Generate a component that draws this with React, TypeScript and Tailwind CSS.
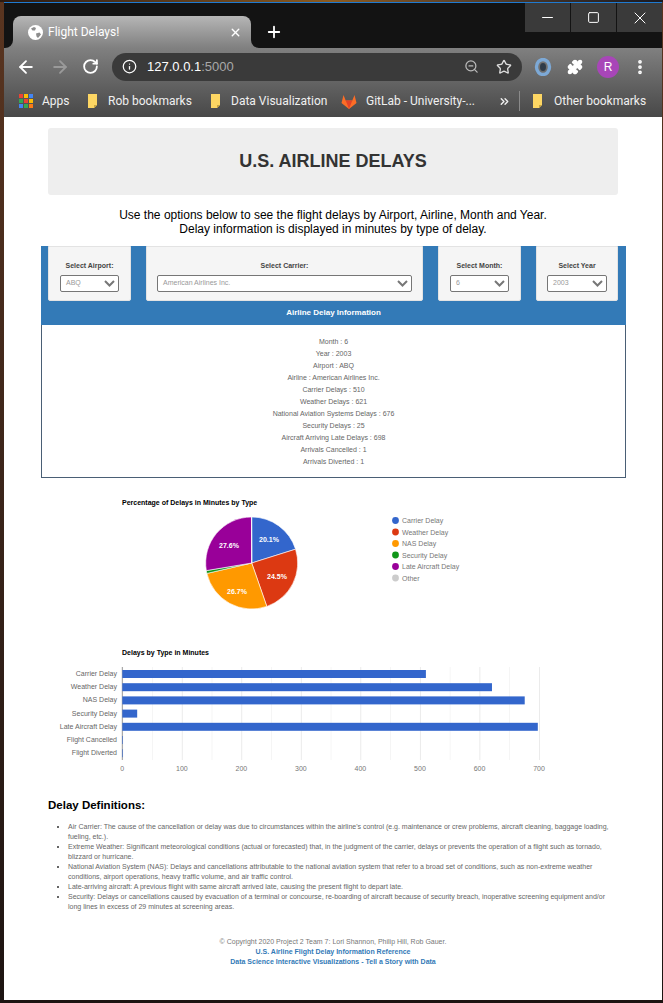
import React from 'react';
import { ArrowLeft, ArrowRight, ChevronsRight, EllipsisVertical, Info, Minus, Plus, Puzzle, RotateCw, Square, Star, X, ZoomOut } from 'lucide-react';

const details = [
  'Month : 6',
  'Year : 2003',
  'Airport : ABQ',
  'Airline : American Airlines Inc.',
  'Carrier Delays : 510',
  'Weather Delays : 621',
  'National Aviation Systems Delays : 676',
  'Security Delays : 25',
  'Aircraft Arriving Late Delays : 698',
  'Arrivals Cancelled : 1',
  'Arrivals Diverted : 1',
];

const definitions = [
  "Air Carrier: The cause of the cancellation or delay was due to circumstances within the airline's control (e.g. maintenance or crew problems, aircraft cleaning, baggage loading, fueling, etc.).",
  'Extreme Weather: Significant meteorological conditions (actual or forecasted) that, in the judgment of the carrier, delays or prevents the operation of a flight such as tornado, blizzard or hurricane.',
  'National Aviation System (NAS): Delays and cancellations attributable to the national aviation system that refer to a broad set of conditions, such as non-extreme weather conditions, airport operations, heavy traffic volume, and air traffic control.',
  'Late-arriving aircraft: A previous flight with same aircraft arrived late, causing the present flight to depart late.',
  'Security: Delays or cancellations caused by evacuation of a terminal or concourse, re-boarding of aircraft because of security breach, inoperative screening equipment and/or long lines in excess of 29 minutes at screening areas.',
];

const slices = [
  { name: 'Carrier Delay', value: 510, color: '#3366cc' },
  { name: 'Weather Delay', value: 621, color: '#dc3912' },
  { name: 'NAS Delay', value: 676, color: '#ff9900' },
  { name: 'Security Delay', value: 25, color: '#109618' },
  { name: 'Late Aircraft Delay', value: 698, color: '#990099' },
  { name: 'Other', value: 2, color: '#cccccc' },
];

const bars = [
  { name: 'Carrier Delay', value: 510 },
  { name: 'Weather Delay', value: 621 },
  { name: 'NAS Delay', value: 676 },
  { name: 'Security Delay', value: 25 },
  { name: 'Late Aircraft Delay', value: 698 },
  { name: 'Flight Cancelled', value: 1 },
  { name: 'Flight Diverted', value: 1 },
];

const Folder = () => (
  <svg width="11" height="15" viewBox="0 0 11 15" className="shrink-0">
    <path d="M1 0h9v11l-3 3H1z" fill="#fdd663" />
    <path d="M10 11l-3 3v-3z" fill="#c9a53f" />
  </svg>
);

const Chevron = () => (
  <svg width="11" height="7" viewBox="0 0 11 7" className="shrink-0">
    <path d="M1 1l4.5 4.5L10 1" fill="none" stroke="#777" strokeWidth="2" />
  </svg>
);

const Picker = ({ label, value, width, pad }: { label: string; value: string; width: string; pad: string }) => (
  <div className={`${width} ${pad} h-[55px] shrink-0 bg-[#f5f5f5] border border-[#e3e3e3] rounded-b-[2px] flex flex-col items-center`}>
    <div className="mt-[14px] text-[7px] leading-[10px] font-bold text-[#444]">{label}</div>
    <div className="mt-[4px] w-full h-[17px] bg-white border border-[#767676] rounded-[2px] flex items-center justify-between pl-[5px] pr-[3px]">
      <span className="text-[7px] text-[#999]">{value}</span>
      <Chevron />
    </div>
  </div>
);

const PieChart = () => {
  const total = slices.reduce((sum, s) => sum + s.value, 0);
  const cx = 251.7;
  const cy = 563;
  const r = 46;
  let angle = -Math.PI / 2;
  return (
    <svg width="658" height="130" viewBox="4 490 658 130" className="block" fontFamily="'Liberation Sans', sans-serif">
      <text x="122" y="504.5" fontSize="7" fontWeight="700" fill="#000">Percentage of Delays in Minutes by Type</text>
      {slices.map((s) => {
        const start = angle;
        angle += (s.value / total) * Math.PI * 2;
        const large = angle - start > Math.PI ? 1 : 0;
        const d = `M${cx} ${cy}L${cx + r * Math.cos(start)} ${cy + r * Math.sin(start)}A${r} ${r} 0 ${large} 1 ${cx + r * Math.cos(angle)} ${cy + r * Math.sin(angle)}Z`;
        return <path key={s.name} d={d} fill={s.color} stroke="#fff" strokeWidth="0.6" />;
      })}
      <g fontSize="7" fontWeight="700" fill="#fff" textAnchor="middle">
        <text x="269" y="542">20.1%</text>
        <text x="277" y="579">24.5%</text>
        <text x="237" y="594">26.7%</text>
        <text x="229" y="548">27.6%</text>
      </g>
      {slices.map((s, i) => (
        <g key={s.name}>
          <circle cx="395.5" cy={520.5 + i * 11.5} r="3.4" fill={s.color} />
          <text x="402" y={523 + i * 11.5} fontSize="7" fill="#777">{s.name}</text>
        </g>
      ))}
    </svg>
  );
};

const BarChart = () => {
  const x0 = 122.3;
  const unit = (539 - x0) / 700;
  return (
    <svg width="658" height="140" viewBox="4 640 658 140" className="block" fontFamily="'Liberation Sans', sans-serif">
      <text x="122" y="654.5" fontSize="7" fontWeight="700" fill="#000">Delays by Type in Minutes</text>
      {Array.from({ length: 15 }, (_, i) => (
        <rect key={i} x={x0 + i * 50 * unit} y="667" width="0.8" height="93" fill={i % 2 === 0 ? '#e6e6e6' : '#f3f3f3'} />
      ))}
      <rect x={x0 - 0.5} y="667" width="1" height="93" fill="#999" />
      {bars.map((b, i) => (
        <g key={b.name}>
          <rect x={x0} y={670 + i * 13.2} width={b.value * unit} height="8" fill="#3366cc" />
          <text x="117" y={676 + i * 13.2} fontSize="7" fill="#666" textAnchor="end">{b.name}</text>
        </g>
      ))}
      {[0, 100, 200, 300, 400, 500, 600, 700].map((v) => (
        <text key={v} x={x0 + v * unit} y="771" fontSize="7" fill="#777" textAnchor="middle">{v}</text>
      ))}
    </svg>
  );
};

const BrowserChrome = () => (
  <div className="bg-gradient-to-b from-[#808080] to-[#484848] h-[69px] text-white">
    <div className="h-[37px] flex items-center">
      <ArrowLeft size={20} strokeWidth={2.2} className="ml-[12px]" />
      <ArrowRight size={20} strokeWidth={2.2} className="ml-[14px] text-[#9a9a9a]" />
      <RotateCw size={17} strokeWidth={2.6} className="ml-[12px]" />
      <div className="ml-[13px] w-[410px] h-[28px] bg-[#3a3a3a] rounded-full flex items-center px-[10px]">
        <Info size={15} />
        <span className="ml-[10px] text-[13px] leading-none">127.0.0.1<span className="text-[#a8a8a8]">:5000</span></span>
        <ZoomOut size={15} className="ml-auto text-[#bbb]" />
        <Star size={16} className="ml-[17px] text-[#ddd]" />
      </div>
      <svg width="18" height="18" viewBox="0 0 18 18" className="ml-[12px]">
        <ellipse cx="9" cy="9" rx="6.5" ry="7.5" fill="none" stroke="#7da9d6" strokeWidth="3.4" />
        <ellipse cx="9" cy="9" rx="3" ry="4" fill="#2f3c4a" />
      </svg>
      <Puzzle size={16} fill="#fff" className="ml-[15px]" />
      <div className="ml-[14px] w-[22px] h-[22px] rounded-full bg-[#a846b8] flex items-center justify-center text-[12px]">R</div>
      <EllipsisVertical size={18} strokeWidth={3} className="ml-[12px]" />
    </div>
    <div className="h-[32px] flex items-center text-[12px] leading-none text-[#f0f0f0] font-['Roboto',sans-serif]">
      <div className="ml-[15px] w-[14px] h-[14px] grid grid-cols-3 gap-[1px]">
        {['#ea4335', '#fbbc04', '#4285f4', '#34a853', '#ea4335', '#fbbc04', '#4285f4', '#34a853', '#fa7b17'].map((c, i) => (
          <span key={i} className="bg-current" style={{ color: c }} />
        ))}
      </div>
      <span className="ml-[9px] w-[45px]">Apps</span>
      <Folder />
      <span className="ml-[10px] w-[102px]">Rob bookmarks</span>
      <Folder />
      <span className="ml-[10px] w-[110px]">Data Visualization</span>
      <svg width="16" height="15" viewBox="0 0 16 15" className="shrink-0">
        <path d="M8 15L0.5 9 2.5 1l2.2 5.5h6.6L13.5 1l2 8z" fill="#fc6d26" />
        <path d="M8 15L4.7 6.5h6.6z" fill="#e24329" />
      </svg>
      <span className="ml-[9px] w-[132px] whitespace-nowrap">GitLab - University-...</span>
      <ChevronsRight size={13} strokeWidth={2.6} />
      <div className="ml-[8px] w-px h-[20px] bg-[#8a8a8a]" />
      <div className="ml-[12px]"><Folder /></div>
      <span className="ml-[11px] whitespace-nowrap">Other bookmarks</span>
    </div>
  </div>
);

const TabBar = () => (
  <div className="h-[45px] bg-[#131313] flex items-start text-white">
    <div className="relative ml-[9px] mt-[13px] w-[238px] h-[32px] rounded-t-[8px] bg-gradient-to-b from-[#b6b6b6] to-[#808080] flex items-center pl-[15px] pr-[9px]">
      {/* curved feet of the active tab */}
      <svg width="8" height="8" viewBox="0 0 8 8" className="absolute left-[-8px] bottom-0">
        <path d="M8 0v8H0a8 8 0 0 0 8-8z" fill="#808080" />
      </svg>
      <svg width="8" height="8" viewBox="0 0 8 8" className="absolute right-[-8px] bottom-0">
        <path d="M0 0v8h8a8 8 0 0 1-8-8z" fill="#808080" />
      </svg>
      <svg width="15" height="15" viewBox="0 0 15 15" className="shrink-0">
        <circle cx="7.5" cy="7.5" r="7.5" fill="#fff" />
        <path d="M3 3.5l3-1.5 2 1-1 2.5H4.5zM8 8.5l3.5-1 1.5 2-3 3.5-1.5-1.5z" fill="#8d8d8d" />
      </svg>
      <span className="ml-[5px] text-[12px] leading-none font-['Roboto',sans-serif]">Flight Delays!</span>
      <X size={13} strokeWidth={2.6} className="ml-auto" />
    </div>
    <Plus size={18} strokeWidth={2.4} className="ml-[14px] mt-[20px]" />
    <div className="ml-auto flex gap-px h-[29px]">
      <div className="w-[45px] bg-[#3a3a3a] flex items-center justify-center"><Minus size={17} strokeWidth={1} absoluteStrokeWidth /></div>
      <div className="w-[45px] bg-[#3a3a3a] flex items-center justify-center"><Square size={13} strokeWidth={1} absoluteStrokeWidth /></div>
      <div className="w-[45px] bg-[#3a3a3a] flex items-center justify-center"><X size={20} strokeWidth={1} absoluteStrokeWidth /></div>
    </div>
  </div>
);

const App = () => {
  return (
    <div className="w-[663px] h-[1003px] overflow-hidden bg-gradient-to-b from-[#5a3520] to-[#1d1412] font-['Liberation_Sans',Arial,sans-serif]">
      <div className="h-[2px] bg-gradient-to-r from-[#2a1a12] via-[#8a5a20] to-[#1a1a22]" />
      <div className="ml-[4px] mr-px border-t border-[#1f7ad0]">
        <TabBar />
        <BrowserChrome />

        <main className="bg-white h-[883px] overflow-hidden">
          {/* Title */}
          <div className="mt-[11px] mx-[44px] h-[67px] bg-[#eeeeee] rounded-[3px] flex items-center justify-center">
            <h1 className="text-[18px] font-bold text-[#333]">U.S. AIRLINE DELAYS</h1>
          </div>

          <p className="mt-[13px] text-center text-[12px] leading-[14px] text-black">
            Use the options below to see the flight delays by Airport, Airline, Month and Year.
            <br />
            Delay information is displayed in minutes by type of delay.
          </p>

          {/* Filters and details */}
          <section className="mt-[10px] ml-[37px] w-[585px]">
            <div className="bg-[#337ab7] h-[79px]">
              <div className="flex gap-[15px] px-[7px]">
                <Picker label="Select Airport:" value="ABQ" width="w-[83px]" pad="px-[11px]" />
                <Picker label="Select Carrier:" value="American Airlines Inc." width="w-[277px]" pad="px-[10px]" />
                <Picker label="Select Month:" value="6" width="w-[83px]" pad="px-[11px]" />
                <Picker label="Select Year" value="2003" width="w-[82px]" pad="px-[10px]" />
              </div>
              <div className="h-[24px] flex items-center justify-center text-[8px] font-bold text-white">Airline Delay Information</div>
            </div>
            <div className="h-[153px] border border-t-0 border-[#4a5f75] pt-[11px] text-center text-[7px] leading-[12px] text-[#666]">
              {details.map((d) => (
                <div key={d}>{d}</div>
              ))}
            </div>
          </section>

          <div className="mt-[12px]">
            <PieChart />
          </div>
          <div className="mt-[20px]">
            <BarChart />
          </div>

          {/* Definitions */}
          <section className="mt-[18px] ml-[44px] mr-[52px]">
            <h3 className="text-[11.5px] leading-[14px] font-bold text-black">Delay Definitions:</h3>
            <ul className="mt-[10px] list-[square] pl-[20px] text-[7px] leading-[10px] text-[#666]">
              {definitions.map((d) => (
                <li key={d}>{d}</li>
              ))}
            </ul>
          </section>

          <footer className="mt-[25px] text-center text-[7px] leading-[10px] text-[#777]">
            <div>© Copyright 2020 Project 2 Team 7: Lori Shannon, Philip Hill, Rob Gauer.</div>
            <div className="font-bold text-[#337ab7]">U.S. Airline Flight Delay Information Reference</div>
            <div className="font-bold text-[#337ab7]">Data Science Interactive Visualizations - Tell a Story with Data</div>
          </footer>
        </main>
      </div>
    </div>
  );
};

export default App;
